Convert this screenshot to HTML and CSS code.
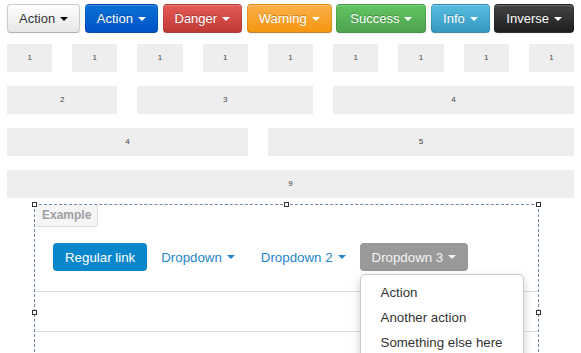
FILE: index.html
```html
<!DOCTYPE html>
<html lang="en">

<head>
  <meta charset="UTF-8">
  <meta name="viewport" content="width=device-width, initial-scale=1.0">
  <title>Dropdowns</title>

  <link rel="stylesheet" href="styles.css">
</head>

<body>
  <div class="btn-row">
    <button class="btn">Action<span class="caret"></span></button>
    <button class="btn btn-primary">Action<span class="caret"></span></button>
    <button class="btn btn-danger">Danger<span class="caret"></span></button>
    <button class="btn btn-warning">Warning<span class="caret"></span></button>
    <button class="btn btn-success">Success<span class="caret"></span></button>
    <button class="btn btn-info">Info<span class="caret"></span></button>
    <button class="btn btn-inverse">Inverse<span class="caret"></span></button>
  </div>

  <div class="grid">
    <div class="cell">1</div>
    <div class="cell">1</div>
    <div class="cell">1</div>
    <div class="cell">1</div>
    <div class="cell">1</div>
    <div class="cell">1</div>
    <div class="cell">1</div>
    <div class="cell">1</div>
    <div class="cell">1</div>

    <div class="cell span-2">2</div>
    <div class="cell span-3">3</div>
    <div class="cell span-4">4</div>

    <div class="cell span-4">4</div>
    <div class="cell span-5">5</div>

    <div class="cell span-9">9</div>
  </div>

  <div class="frame">
    <span class="handle top-left"></span>
    <span class="handle top-mid"></span>
    <span class="handle top-right"></span>
    <span class="handle mid-left"></span>
    <span class="handle mid-right"></span>

    <div class="example-label">Example</div>

    <div class="nav-row">
      <ul class="nav-pills">
        <li class="active"><a href="#">Regular link</a></li>
        <li><a href="#">Dropdown<span class="caret"></span></a></li>
        <li><a href="#">Dropdown 2<span class="caret"></span></a></li>
        <li class="open">
          <a href="#">Dropdown 3<span class="caret"></span></a>
          <ul class="dropdown-menu">
            <li><a href="#">Action</a></li>
            <li><a href="#">Another action</a></li>
            <li><a href="#">Something else here</a></li>
          </ul>
        </li>
      </ul>
    </div>
    <div class="blank-row"></div>
  </div>
</body>

</html>
```
FILE: styles.css
```css
html,
body {
  overflow: hidden;
}

body {
  margin: 0;
  padding: 4px 7px 0 7px;

  font-family: "Liberation Sans", Arial, sans-serif;
  color: #333;
  background-color: #fff;
}

/* button row */

.btn-row {
  display: flex;
  justify-content: space-between;
}

.btn {
  display: inline-flex;
  align-items: center;

  height: 29px;
  padding: 0 11px;

  font: inherit;
  font-size: 13px;
  color: #333;
  text-shadow: 0 1px 1px rgba(255, 255, 255, 0.75);

  border: 1px solid #ccc;
  border-bottom-color: #b3b3b3;
  border-radius: 4px;

  background-image: linear-gradient(to bottom, #ffffff, #e6e6e6);
  box-shadow: inset 0 1px 0 rgba(255, 255, 255, 0.2), 0 1px 2px rgba(0, 0, 0, 0.05);
}

.btn-primary,
.btn-danger,
.btn-warning,
.btn-success,
.btn-info,
.btn-inverse {
  color: #fff;
  text-shadow: 0 -1px 0 rgba(0, 0, 0, 0.25);
  border-color: rgba(0, 0, 0, 0.1) rgba(0, 0, 0, 0.1) rgba(0, 0, 0, 0.25);
}

.btn-primary {
  background-image: linear-gradient(to bottom, #0a72d6, #0052c8);
}

.btn-danger {
  background-image: linear-gradient(to bottom, #e45a56, #c03a34);
}

.btn-warning {
  background-image: linear-gradient(to bottom, #fbb04a, #f5960f);
}

.btn-success {
  background-image: linear-gradient(to bottom, #62c462, #4ea34e);
  padding: 0 13px;
}

.btn-info {
  background-image: linear-gradient(to bottom, #57bde0, #3499c0);
}

.btn-inverse {
  background-image: linear-gradient(to bottom, #444444, #1e1e1e);
}

.caret {
  display: inline-block;
  width: 0;
  height: 0;
  margin-left: 5px;

  border-top: 4px solid #000;
  border-left: 4px solid transparent;
  border-right: 4px solid transparent;
}

.btn-primary .caret,
.btn-danger .caret,
.btn-warning .caret,
.btn-success .caret,
.btn-info .caret,
.btn-inverse .caret {
  border-top-color: #fff;
}

/* grid */

.grid {
  display: grid;
  grid-template-columns: repeat(9, 1fr);
  column-gap: 20px;
  row-gap: 14px;

  margin-top: 11px;
}

.cell {
  height: 28px;
  line-height: 28px;

  text-align: center;
  font-size: 8px;
  color: #444;

  background-color: #eee;
}

.span-2 {
  grid-column: span 2;
}

.span-3 {
  grid-column: span 3;
}

.span-4 {
  grid-column: span 4;
}

.span-5 {
  grid-column: span 5;
}

.span-9 {
  grid-column: span 9;
}

/* example frame */

.frame {
  position: relative;
  box-sizing: border-box;

  width: 505px;
  height: 218px;
  margin: 6px 0 0 27px;

  border: 1px dashed #6f88a6;
}

.handle {
  position: absolute;

  width: 3px;
  height: 3px;

  border: 1px solid #333;
  background-color: #fff;
}

.top-left {
  top: -3px;
  left: -3px;
}

.top-mid {
  top: -3px;
  left: 249px;
}

.top-right {
  top: -3px;
  right: -3px;
}

.mid-left {
  top: 105px;
  left: -3px;
}

.mid-right {
  top: 105px;
  right: -3px;
}

.example-label {
  display: inline-block;

  margin: 0 0 0 1px;
  padding: 2px 6px 3px 6px;

  font-size: 12px;
  font-weight: bold;
  line-height: 16px;
  color: #9da0a4;

  background-color: #f5f5f5;
  border: 1px solid #ddd;
  border-top: none;
  border-left: none;
  border-radius: 0 0 4px 0;
}

.nav-row {
  padding: 16px 0 20px 18px;
  border-bottom: 1px solid #ddd;
}

.nav-pills {
  display: flex;

  margin: 0;
  padding: 0;
  list-style: none;
}

.nav-pills > li {
  position: relative;
  margin-right: 2px;
}

.nav-pills > li > a {
  display: flex;
  align-items: center;

  height: 28px;
  padding: 0 12px;

  font-size: 13.3px;
  color: #1f86c7;
  text-decoration: none;

  border-radius: 4px;
}

.nav-pills .caret {
  border-top-color: #1f86c7;
}

.nav-pills > .active > a {
  color: #fff;
  background-color: #0a87cc;
}

.nav-pills > .open > a {
  color: #f4f4f4;
  background-color: #999;
}

.nav-pills > .open .caret {
  border-top-color: #f4f4f4;
}

.blank-row {
  height: 39px;
  border-bottom: 1px solid #ddd;
}

/* dropdown menu */

.dropdown-menu {
  position: absolute;
  top: 31px;
  left: 0;
  z-index: 10;

  min-width: 160px;
  margin: 0;
  padding: 5px 0;
  list-style: none;

  background-color: #fff;
  border: 1px solid rgba(0, 0, 0, 0.2);
  border-radius: 5px;
  box-shadow: 0 4px 10px rgba(0, 0, 0, 0.2);
}

.dropdown-menu a {
  display: block;

  padding: 3px 20px;

  font-size: 13.3px;
  line-height: 19px;
  color: #333;
  text-decoration: none;
  white-space: nowrap;
}
```
